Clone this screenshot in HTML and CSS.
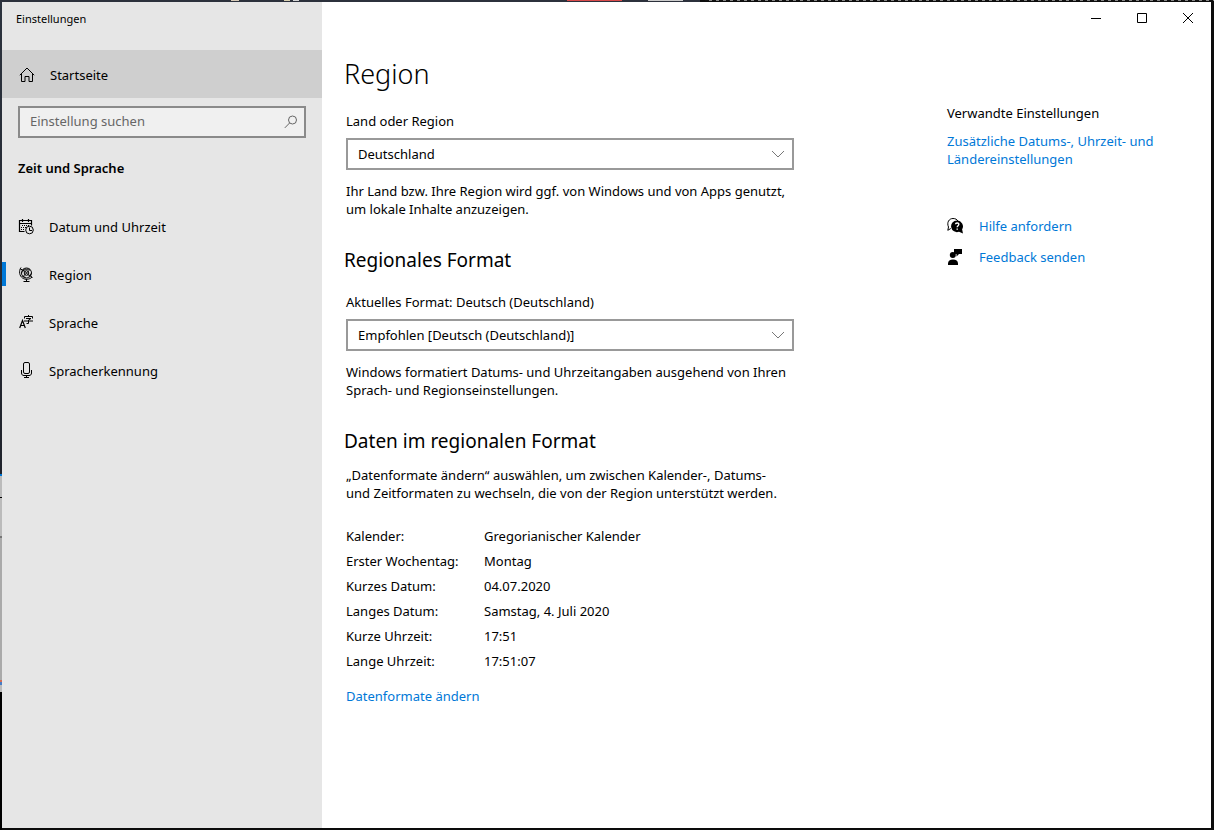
FILE: index.html
```html
<!DOCTYPE html>
<html lang="de">
<head>
<meta charset="utf-8">
<title>Einstellungen</title>
<link rel="stylesheet" href="styles.css">
</head>
<body>
<div class="backdrop">
<div class="window">
  <aside class="sidebar">
    <div class="app-title">Einstellungen</div>
    <a class="home" href="#">
      <svg class="icon" viewBox="0 0 16 16"><path d="M.8 8.200 8 1l7.200 7.200M2.500 7v7.500h3.500V9.500h4v5h3.500V7"/></svg>
      Startseite
    </a>
    <form class="search">
      <input class="search-input" type="search" aria-label="Einstellung suchen" placeholder="Einstellung suchen">
      <button class="search-button" type="button" aria-label="Suchen">
        <svg viewBox="0 0 14 14"><circle cx="8.500" cy="5" r="4"/><path d="M5.700 7.900.8 12.900"/></svg>
      </button>
    </form>
    <h2 class="group-title">Zeit und Sprache</h2>
    <nav class="nav">
      <a class="nav-item" href="#">
        <svg class="icon" viewBox="0 0 16 16"><path d="M6.500 12.500h-5v-11h12v5M1.500 4.500h12M4.500 0v3M10.500 0v3" stroke-width="1.200"/><path d="M4 6.500h7M3 8.500h6M3 10.500h4" stroke-dasharray="1 1"/><circle cx="11.500" cy="11" r="3.800"/><path d="M11.500 8.500v3H14"/></svg>
        Datum und Uhrzeit
      </a>
      <a class="nav-item nav-current" href="#" aria-current="page">
        <svg class="icon" viewBox="0 0 16 16"><circle cx="8.500" cy="6" r="5"/><circle cx="8.500" cy="6" r="2.300"/><path d="M3 .5C.5 4 1.500 9 4.500 11c3 2 6.500 1.700 9.500-.8M8.500 12v2.500M5.500 14.500h6M2 1.500l3 2M12 8.500l2.500 2M5 2.500l7 7M12 2.500l-7 7M4 5.500l2-2.500M11 9.500l2-3M5.500 2.200h6M4.500 9.500l3 .8"/></svg>
        Region
      </a>
      <a class="nav-item" href="#">
        <svg class="icon" viewBox="0 0 16 16"><path d="M1.700 13 4.500 5.500 7.300 13M2.700 10.500h3.700" stroke-width="1.200"/><path d="M10.500 0v1.500M6.500 3.500v-2h8v2M8 3.500h5L10.500 5v3.500h-2M6 6h9"/></svg>
        Sprache
      </a>
      <a class="nav-item" href="#">
        <svg class="icon" viewBox="0 0 16 16"><rect x="5.500" y="-.5" width="6" height="11" rx="1.500"/><path d="M3.500 7v3c0 1.700 1 2.500 2.500 2.500h5c1.500 0 2.500-.8 2.500-2.500V7M8.500 12.500v2M6 14.500h5"/></svg>
        Spracherkennung
      </a>
    </nav>
  </aside>

  <main class="main">
    <header class="caption-bar">
      <button class="caption-button" type="button" aria-label="Minimieren"><svg viewBox="0 0 11 11"><path d="M0 5.500h10"/></svg></button>
      <button class="caption-button" type="button" aria-label="Maximieren"><svg viewBox="0 0 11 11"><path d="M.5.5h9v9h-9z"/></svg></button>
      <button class="caption-button" type="button" aria-label="Schließen"><svg viewBox="0 0 11 11"><path d="m0 0 10 10M10 0 0 10"/></svg></button>
    </header>
    <div class="content">
      <div class="settings">
        <h1 class="page-title">Region</h1>
        <section class="section">
          <label class="label" for="country">Land oder Region</label>
          <div class="select-box">
            <select class="select" id="country"><option>Deutschland</option></select>
            <svg class="chevron" viewBox="0 0 14 8"><path d="m1 1 6 6 6-6"/></svg>
          </div>
          <p class="text">Ihr Land bzw. Ihre Region wird ggf. von Windows und von Apps genutzt,<br>um lokale Inhalte anzuzeigen.</p>
        </section>
        <section class="section">
          <h2 class="section-title">Regionales Format</h2>
          <label class="label label-spaced" for="format">Aktuelles Format: Deutsch (Deutschland)</label>
          <div class="select-box">
            <select class="select" id="format"><option>Empfohlen [Deutsch (Deutschland)]</option></select>
            <svg class="chevron" viewBox="0 0 14 8"><path d="m1 1 6 6 6-6"/></svg>
          </div>
          <p class="text">Windows formatiert Datums- und Uhrzeitangaben ausgehend von Ihren<br>Sprach- und Regionseinstellungen.</p>
        </section>
        <section class="section">
          <h2 class="section-title">Daten im regionalen Format</h2>
          <p class="text intro">„Datenformate ändern“ auswählen, um zwischen Kalender-, Datums-<br>und Zeitformaten zu wechseln, die von der Region unterstützt werden.</p>
          <table class="formats">
            <tr><th scope="row">Kalender:</th><td>Gregorianischer Kalender</td></tr>
            <tr><th scope="row">Erster Wochentag:</th><td>Montag</td></tr>
            <tr><th scope="row">Kurzes Datum:</th><td>04.07.2020</td></tr>
            <tr><th scope="row">Langes Datum:</th><td>Samstag, 4. Juli 2020</td></tr>
            <tr><th scope="row">Kurze Uhrzeit:</th><td>17:51</td></tr>
            <tr><th scope="row">Lange Uhrzeit:</th><td>17:51:07</td></tr>
          </table>
          <a class="link" href="#">Datenformate ändern</a>
        </section>
      </div>
      <div class="related">
        <h2 class="related-title">Verwandte Einstellungen</h2>
        <a class="link" href="#">Zusätzliche Datums-, Uhrzeit- und<br>Ländereinstellungen</a>
        <div class="help">
          <a class="help-link" href="#">
            <svg class="help-icon" viewBox="0 0 16 16"><path class="outline" d="M3.800 10.500.8 12.300 1.500 9C-.5 4.500 2 .5 6 .5c2.500 0 4 1 5 2.500"/><path d="M10 2.500a5.800 5.800 0 1 0 2 11.200l4 1.800-.9-4.200A5.800 5.800 0 0 0 10 2.500z"/><path class="question" d="M8.500 6.300c.2-2 3.500-1.700 3.300.2-.1 1.200-1.600 1.200-1.600 2.700M10.200 10.500v1.300"/></svg>
            Hilfe anfordern
          </a>
          <a class="help-link" href="#">
            <svg class="help-icon" viewBox="0 0 16 16"><path d="M7 0h8v5h-3L9.500 7.500V5H7zM1 16v-1.500C1 12 3 10.500 6 10.500s5 1.500 5 4V16z"/><circle cx="5.800" cy="6" r="3"/></svg>
            Feedback senden
          </a>
        </div>
      </div>
    </div>
  </main>
</div>
</div>
</body>
</html>
```
FILE: styles.css
```css
* { box-sizing: border-box; }

body {
  margin: 0;
  background: #0c0c0c;
  color: #000;
  font: 13px/18px "Noto Sans", "Open Sans", sans-serif;
}

.backdrop {
  display: flex;
  min-height: 100vh;
  padding: 2px 3px 2px 2px;
  background:
    linear-gradient(90deg, transparent 231px, #d8cbb8 231px 239px, transparent 239px 284px, #d8d0b0 284px 290px, transparent 290px 293px, #d5d5d5 293px 299px, transparent 299px 567px, #d94b4b 567px 622px, transparent 622px 648px, #ccc 648px 683px, transparent 683px) 0 0 / 100% 1px no-repeat,
    repeating-linear-gradient(90deg, #111 0 4px, #888 4px 7px) 705px 0 / 509px 1px no-repeat,
    linear-gradient(#2c313c 0 2px, transparent 2px) 0 0 / 700px 2px no-repeat,
    linear-gradient(#2c333e 0, #20232c 474px, #0078d7 474px 476px, #bbb 476px 497px, #000 497px 498px, #bbb 498px 536px, #777 536px 538px, #aaa 538px 680px, #d36c55 680px 682px, #477dc5 682px 685px, #bbb 685px 692px, #000 692px) 0 0 / 2px 100% no-repeat,
    #0c0c0c;
}

.window { display: flex; flex: 1; background: #fff; }

svg { display: block; fill: none; stroke: currentColor; stroke-width: 1; }
a { text-decoration: none; }
h1, h2, p { margin: 0; font-weight: 400; }

/* Navigation */
.sidebar { flex: 0 0 320px; background: #e6e6e6; }
.app-title { height: 48px; padding: 8px 14px; font-size: 11px; }
.home {
  display: flex;
  align-items: center;
  gap: 15px;
  height: 48px;
  padding: 1px 17px 0;
  background: #cfcfcf;
  color: #000;
}
.icon { width: 16px; height: 16px; overflow: visible; }
.search {
  display: flex;
  height: 32px;
  margin: 8px 16px 0;
  border: 2px solid #8a8a8a;
  background: #f0f0f0;
}
.search-input {
  flex: 1;
  min-width: 0;
  padding: 0 10px 2px;
  border: 0;
  background: none;
  color: #000;
  font: inherit;
}
.search-input::placeholder { color: #666; opacity: 1; }
.search-button { padding: 0 6px; border: 0; background: none; color: #666; }
.search-button svg { width: 14px; height: 14px; }
.group-title { margin: 21px 16px 0; font-size: 13px; font-weight: 600; }
.nav { margin-top: 26px; }
.nav-item {
  display: flex;
  align-items: center;
  gap: 15px;
  height: 48px;
  padding-left: 16px;
  color: #000;
}
.nav-current { background: linear-gradient(#0078d7, #0078d7) 0 11px / 4px 24px no-repeat; }

/* Window buttons */
.main { flex: 1; min-width: 0; }
.caption-bar { display: flex; justify-content: flex-end; }
.caption-button {
  display: grid;
  place-items: center;
  width: 46px;
  height: 32px;
  padding: 0;
  border: 0;
  background: none;
  color: #000;
}
.caption-button svg { width: 11px; height: 11px; overflow: visible; }

/* Page */
.content { display: flex; gap: 153px; padding: 22px 24px 24px; }
.settings { flex: 0 0 448px; }
.page-title { margin-left: -2px; font-size: 27px; line-height: 36px; font-weight: 300; }
.section { margin-top: 28px; }
.page-title + .section { margin-top: 20px; }
.section-title { margin-left: -2px; font-size: 19px; line-height: 28px; }
.label { display: block; }
.label-spaced { margin-top: 19px; }
.select-box { position: relative; margin-top: 8px; }
.select {
  display: block;
  width: 100%;
  height: 32px;
  padding: 0 36px 0 10px;
  border: 2px solid #999;
  border-radius: 0;
  background: #fff;
  color: #000;
  font: inherit;
  appearance: none;
}
.chevron {
  position: absolute;
  top: 12px;
  right: 9px;
  width: 14px;
  height: 8px;
  color: #777;
  pointer-events: none;
}
.text { margin-top: 12px; white-space: nowrap; }
.intro { margin-top: 11px; }
.formats { margin: 21px 0 14px; border-collapse: collapse; }
.formats th, .formats td { height: 25px; padding: 0; text-align: left; font-weight: 400; }
.formats th { width: 138px; }
.link { display: block; color: #0078d7; }

/* Related settings */
.related { flex: 1; padding-top: 48px; white-space: nowrap; }
.related-title { margin-bottom: 10px; font-size: 13px; }
.help { display: grid; gap: 13px; margin-top: 49px; }
.help-link { display: flex; align-items: center; gap: 16px; color: #0078d7; }
.help-icon { width: 16px; height: 16px; color: #000; fill: #000; stroke: none; }
.outline { fill: none; stroke: #000; }
.question { fill: none; stroke: #fff; stroke-width: 1.4; }
```
